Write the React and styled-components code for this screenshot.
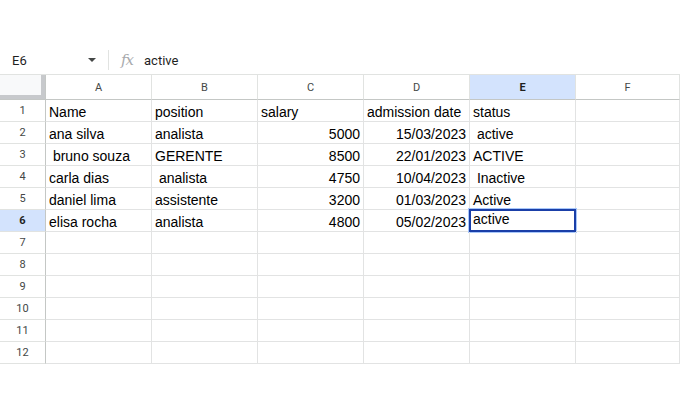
import React from "react";
import styled, { createGlobalStyle, css } from "styled-components";

const Global = createGlobalStyle`
  html, body { margin: 0; padding: 0; background: #fff; }
  body { font-family: "Liberation Sans", Arial, sans-serif; }
`;

const Page = styled.div`
  width: 680px;
  height: 411px;
  overflow: hidden;
  background: #fff;
  display: flex;
  flex-direction: column;
`;

const TopSpace = styled.div`
  height: 46px;
  flex: none;
`;

const FormulaBar = styled.div`
  height: 29px;
  flex: none;
  display: flex;
  align-items: center;
  border-bottom: 1px solid #e1e3e1;
  box-sizing: border-box;
  font-size: 13px;
  color: #1f1f1f;
`;

const NameBox = styled.div`
  width: 86px;
  padding-left: 12px;
  box-sizing: border-box;
  font-family: "Roboto", "Liberation Sans", sans-serif;
  font-size: 13px;
  color: #1f1f1f;
`;

const Caret = styled.div`
  width: 0;
  height: 0;
  margin-left: 2px;
  border-left: 4px solid transparent;
  border-right: 4px solid transparent;
  border-top: 4px solid #444746;
`;

const Divider = styled.div`
  width: 1px;
  height: 20px;
  background: #e1e3e1;
  margin-left: 12px;
`;

const Fx = styled.span`
  margin-left: 12px;
  font-family: "DejaVu Serif", "Liberation Serif", serif;
  font-style: italic;
  font-size: 15px;
  color: #a8aaad;
  letter-spacing: -1px;
`;

const FormulaText = styled.span`
  margin-left: 11px;
  font-family: "Roboto", "Liberation Sans", sans-serif;
  font-size: 13px;
  color: #1f1f1f;
`;

const Grid = styled.div`
  display: grid;
  grid-template-columns: 46px repeat(5, 106px) 1fr;
  grid-template-rows: 25px repeat(12, 22px);
`;

const Corner = styled.div`
  background: #f8f9fa;
  box-sizing: border-box;
  border-right: 1px solid #c4c7c5;
  border-bottom: 1px solid #c4c7c5;
  box-shadow: inset -4px -4px 0 #c7c9cc;
`;

const ColHead = styled.div`
  box-sizing: border-box;
  display: flex;
  align-items: center;
  justify-content: center;
  font-family: "Roboto", "Liberation Sans", sans-serif;
  font-size: 11px;
  color: #444746;
  border-right: 1px solid #e1e3e1;
  border-bottom: 1px solid #c4c7c5;
  background: #fff;
  ${(p) =>
    p.$active &&
    css`
      background: #d3e3fd;
      font-weight: 700;
      color: #1f1f1f;
    `}
`;

const RowHead = styled.div`
  box-sizing: border-box;
  display: flex;
  align-items: center;
  justify-content: center;
  font-family: "Roboto", "Liberation Sans", sans-serif;
  font-size: 11px;
  color: #444746;
  border-right: 1px solid #c4c7c5;
  border-bottom: 1px solid #e1e3e1;
  background: #fff;
  ${(p) =>
    p.$active &&
    css`
      background: #d3e3fd;
      font-weight: 700;
      color: #1f1f1f;
    `}
`;

const Cell = styled.div`
  position: relative;
  box-sizing: border-box;
  display: flex;
  align-items: center;
  justify-content: ${(p) => (p.$num ? "flex-end" : "flex-start")};
  padding: 2px 3px 0 3px;
  font-family: "Liberation Sans", Arial, sans-serif;
  font-size: 14px;
  color: #000;
  white-space: pre;
  overflow: hidden;
  border-right: 1px solid #e2e3e3;
  border-bottom: 1px solid #e2e3e3;
  ${(p) =>
    p.$selected &&
    css`
      overflow: visible;
      align-items: flex-start;
      padding-top: 1px;
      &::after {
        content: "";
        position: absolute;
        left: -1px;
        top: -1px;
        right: -1px;
        bottom: -1px;
        border: 2px solid #1a3fa8;
        box-shadow: 0 0 0 1px #a8c7fa;
        pointer-events: none;
      }
    `}
`;

const cols = ["A", "B", "C", "D", "E", "F"];
const data = [
  ["Name", "position", "salary", "admission date", "status"],
  ["ana silva", "analista", 5000, "15/03/2023", " active"],
  [" bruno souza", "GERENTE", 8500, "22/01/2023", "ACTIVE"],
  ["carla dias", " analista", 4750, "10/04/2023", " Inactive"],
  ["daniel lima", "assistente", 3200, "01/03/2023", "Active"],
  ["elisa rocha", "analista", 4800, "05/02/2023", "active"],
];

const isDate = (v) => typeof v === "string" && /^\d\d\/\d\d\/\d{4}$/.test(v);

export default function App() {
  const rows = Array.from({ length: 12 }, (_, i) => data[i] || []);
  return (
    <Page>
      <Global />
      <TopSpace />
      <FormulaBar>
        <NameBox>E6</NameBox>
        <Caret />
        <Divider />
        <Fx>fx</Fx>
        <FormulaText>active</FormulaText>
      </FormulaBar>
      <Grid>
        <Corner />
        {cols.map((c) => (
          <ColHead key={c} $active={c === "E"}>
            {c}
          </ColHead>
        ))}
        {rows.map((r, ri) => (
          <React.Fragment key={ri}>
            <RowHead $active={ri === 5}>{ri + 1}</RowHead>
            {cols.map((c, ci) => {
              const v = r[ci];
              const num = typeof v === "number" || isDate(v);
              return (
                <Cell key={c} $num={num} $selected={ri === 5 && ci === 4}>
                  {v !== undefined ? String(v) : ""}
                </Cell>
              );
            })}
          </React.Fragment>
        ))}
      </Grid>
    </Page>
  );
}
